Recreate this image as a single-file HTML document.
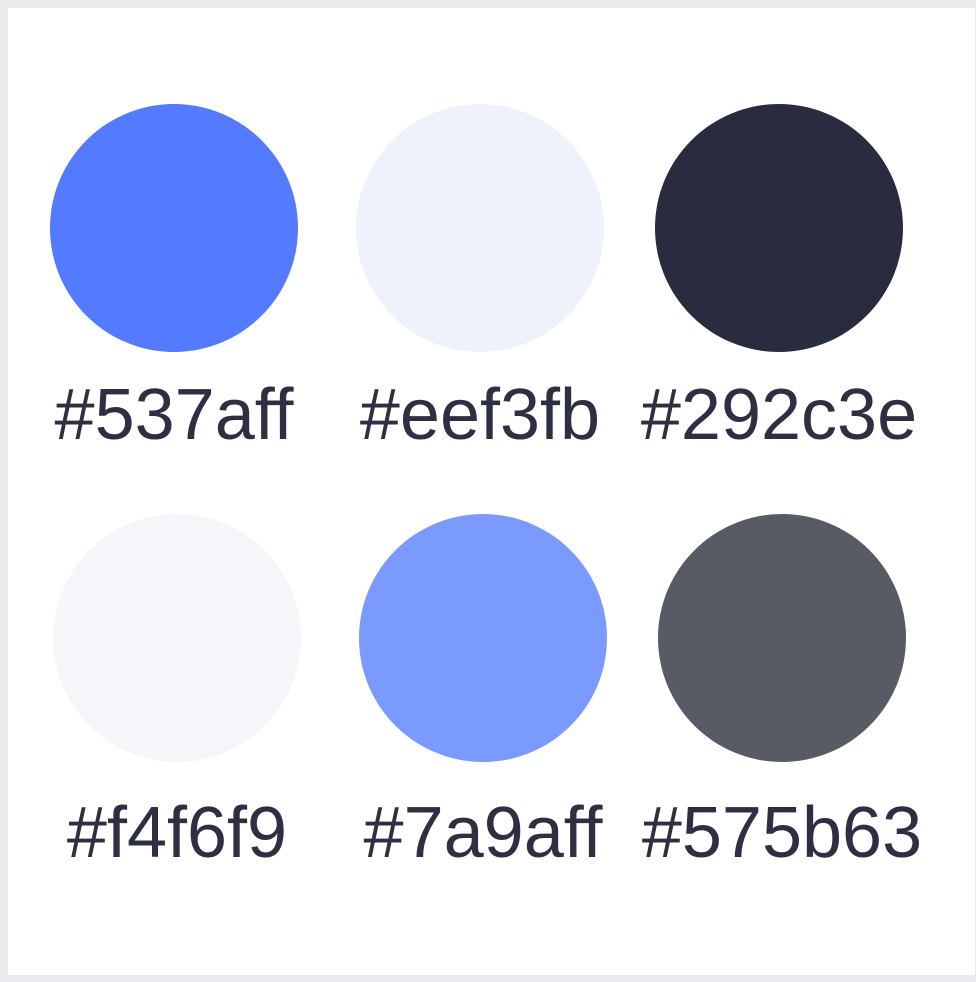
<!DOCTYPE html>
<html><head><style>
html,body{margin:0;padding:0}
body{width:976px;height:982px;background:#e9eaee;position:relative;overflow:hidden;font-family:"Liberation Sans",sans-serif}
.card{position:absolute;left:8px;top:8px;width:967px;height:967px;background:#fff}
.c{position:absolute;width:248px;height:248px;border-radius:50%}
.t{position:absolute;width:320px;text-align:center;font-size:72px;color:#2d3042;line-height:1;letter-spacing:0px}
</style></head><body>
<div class="card"></div>
<div class="c" style="left:50px;top:104px;background:#537aff"></div>
<div class="c" style="left:356px;top:104px;background:#eef3fb"></div>
<div class="c" style="left:655px;top:104px;background:#292c3e"></div>
<div class="c" style="left:53px;top:514px;background:#f4f6f9"></div>
<div class="c" style="left:359px;top:514px;background:#7a9aff"></div>
<div class="c" style="left:658px;top:514px;background:#575b63"></div>
<div class="t" style="left:14px;top:379px">#537aff</div>
<div class="t" style="left:320px;top:379px">#eef3fb</div>
<div class="t" style="left:619px;top:379px">#292c3e</div>
<div class="t" style="left:17px;top:797px">#f4f6f9</div>
<div class="t" style="left:323px;top:797px">#7a9aff</div>
<div class="t" style="left:622px;top:797px">#575b63</div>
</body></html>
